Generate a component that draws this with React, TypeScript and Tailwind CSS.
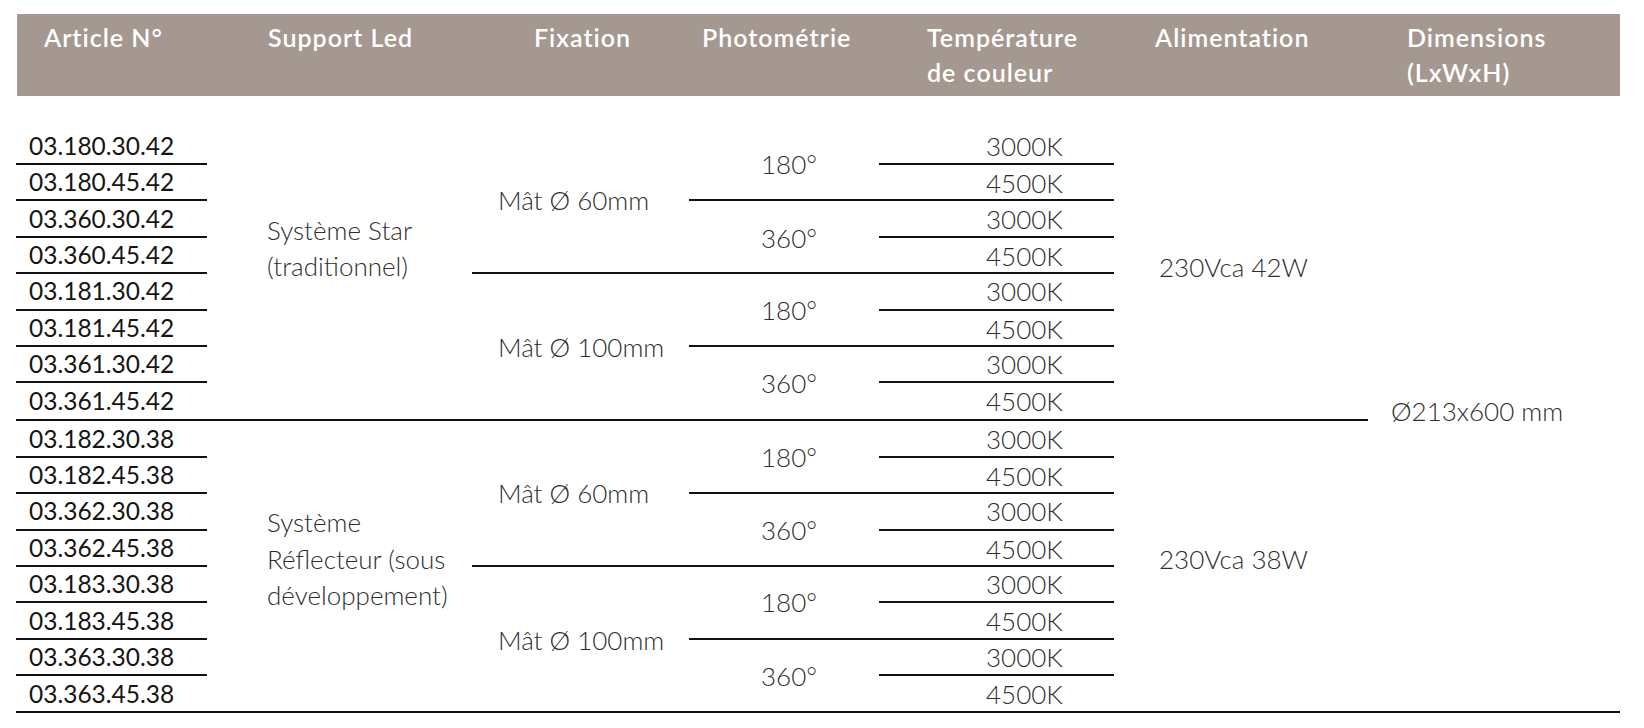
const groups = [
  {
    support: ["Système Star", "(traditionnel)"],
    power: "230Vca 42W",
    mounts: [
      { label: "Mât Ø 60mm", photos: [{ deg: "180°", codes: ["03.180.30.42", "03.180.45.42"] }, { deg: "360°", codes: ["03.360.30.42", "03.360.45.42"] }] },
      { label: "Mât Ø 100mm", photos: [{ deg: "180°", codes: ["03.181.30.42", "03.181.45.42"] }, { deg: "360°", codes: ["03.361.30.42", "03.361.45.42"] }] },
    ],
  },
  {
    support: ["Système", "Réflecteur (sous", "développement)"],
    power: "230Vca 38W",
    mounts: [
      { label: "Mât Ø 60mm", photos: [{ deg: "180°", codes: ["03.182.30.38", "03.182.45.38"] }, { deg: "360°", codes: ["03.362.30.38", "03.362.45.38"] }] },
      { label: "Mât Ø 100mm", photos: [{ deg: "180°", codes: ["03.183.30.38", "03.183.45.38"] }, { deg: "360°", codes: ["03.363.30.38", "03.363.45.38"] }] },
    ],
  },
];

const temps = ["3000K", "4500K"];

const Header = () => (
  <div className="flex h-[82px] w-[1603px] ml-px bg-[#a59890] pt-[6px] text-[25px] font-semibold leading-[35px] tracking-[1px] text-white">
    <div className="w-[251px] pl-[27px]">Article N°</div>
    <div className="w-[266px]">Support Led</div>
    <div className="w-[168px]">Fixation</div>
    <div className="w-[225px]">Photométrie</div>
    <div className="w-[228px]">
      Température
      <br />
      de couleur
    </div>
    <div className="w-[252px]">Alimentation</div>
    <div>
      Dimensions
      <br />
      (LxWxH)
    </div>
  </div>
);

type Group = (typeof groups)[number];

const GroupRows = ({ group, last }: { group: Group; last: boolean }) => {
  const codes = group.mounts.flatMap((m) => m.photos.flatMap((p) => p.codes));
  return (
    <div className={`flex ${last ? "h-[289.2px]" : "border-b-2 border-[#111]"}`}>
      <div className="flex w-[191px] flex-col">
        {codes.map((c, i) => (
          <div
            key={c}
            className={`flex items-center pl-[13px] text-[24.5px] font-normal text-[#151515] ${i < codes.length - 1 ? "h-[36.4px] border-b-2 border-[#111]" : "flex-1"}`}
          >
            {c}
          </div>
        ))}
      </div>
      <div className="w-[265px] pl-[60px] pt-[83px] leading-[36.5px]">
        {group.support.map((s) => (
          <div key={s}>{s}</div>
        ))}
      </div>
      <div className="flex w-[642px] flex-col">
        {group.mounts.map((m, mi) => (
          <div key={mi} className={`flex ${mi === 0 ? "h-[145.6px] border-b-2 border-[#111]" : "flex-1"}`}>
            <div className="flex w-[217px] items-center pl-[26px]">{m.label}</div>
            <div className="flex flex-1 flex-col">
              {m.photos.map((p, pi) => (
                <div key={pi} className={`flex ${pi === 0 ? "h-[72.8px] border-b-2 border-[#111]" : "flex-1"}`}>
                  <div className="flex w-[190px] items-center pl-[72px]">{p.deg}</div>
                  <div className="flex flex-1 flex-col">
                    {temps.map((t, ti) => (
                      <div
                        key={t}
                        className={`flex items-center pl-[107px] ${ti === 0 ? "h-[36.4px] border-b-2 border-[#111]" : "flex-1"}`}
                      >
                        {t}
                      </div>
                    ))}
                  </div>
                </div>
              ))}
            </div>
          </div>
        ))}
      </div>
      <div className="w-[254px] pl-[45px] pt-[120px] leading-[36px]">{group.power}</div>
    </div>
  );
};

export default function App() {
  return (
    <div className="min-h-screen bg-white pl-4 pt-[14px] font-['Lato',sans-serif]">
      <Header />
      <div className="mt-[32.6px] flex w-[1604px] border-b-2 border-[#111] text-[26px] font-light leading-[36px] text-[#2e2e2e]">
        <div className="flex w-[1352px] flex-col">
          {groups.map((g, i) => (
            <GroupRows key={i} group={g} last={i === groups.length - 1} />
          ))}
        </div>
        <div className="flex flex-1 items-center pb-[18px] pl-[23px]">Ø213x600 mm</div>
      </div>
    </div>
  );
}
